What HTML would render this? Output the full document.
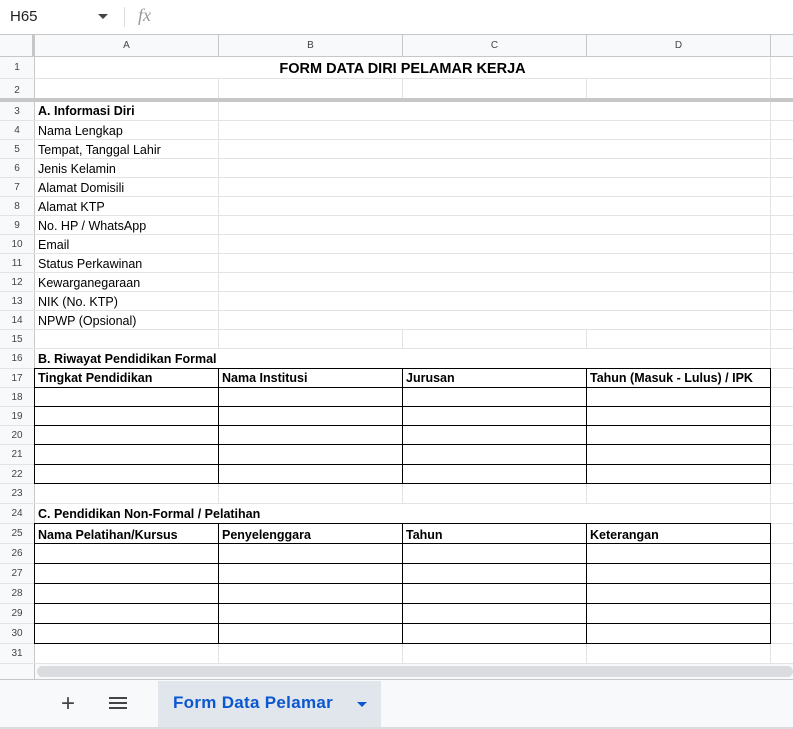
<!DOCTYPE html>
<html><head><meta charset="utf-8"><style>
*{margin:0;padding:0;box-sizing:border-box}
body{width:793px;height:729px;overflow:hidden;background:#fff;font-family:"Liberation Sans",sans-serif;position:relative}
.a{position:absolute}
.rn{position:absolute;left:0;width:34px;text-align:center;font-size:10px;color:#444;}
.t{position:absolute;font-size:12.5px;color:#000;white-space:nowrap;left:38px}
.b{font-weight:bold}
</style></head><body>
<!-- formula bar -->
<div class="a" style="left:10px;top:8px;font-size:15px;color:#1f1f1f">H65</div>
<div class="a" style="left:98px;top:14px;width:0;height:0;border-left:5px solid transparent;border-right:5px solid transparent;border-top:5px solid #444"></div>
<div class="a" style="left:124px;top:7px;width:1px;height:20px;background:#ddd"></div>
<div class="a" style="left:138px;top:5px;font-size:18px;font-style:italic;color:#999;font-family:'Liberation Serif',serif">fx</div>
<div class="a" style="left:0;top:34px;width:793px;height:1px;background:#c7c7c7"></div>
<!-- header row -->
<div class="a" style="left:0;top:35px;width:793px;height:22px;background:#f8f9fa"></div>
<div class="a" style="left:32px;top:35px;width:3px;height:22px;background:#c7c7c7"></div>
<div class="a" style="left:0;top:56px;width:793px;height:1px;background:#c7c7c7"></div>
<div class="a" style="left:218px;top:35px;width:1px;height:22px;background:#c7c7c7"></div>
<div class="a" style="left:402px;top:35px;width:1px;height:22px;background:#c7c7c7"></div>
<div class="a" style="left:586px;top:35px;width:1px;height:22px;background:#c7c7c7"></div>
<div class="a" style="left:770px;top:35px;width:1px;height:22px;background:#c7c7c7"></div>
<div class="a" style="left:35px;top:40px;width:183px;text-align:center;font-size:10px;color:#444">A</div>
<div class="a" style="left:219px;top:40px;width:183px;text-align:center;font-size:10px;color:#444">B</div>
<div class="a" style="left:403px;top:40px;width:183px;text-align:center;font-size:10px;color:#444">C</div>
<div class="a" style="left:587px;top:40px;width:183px;text-align:center;font-size:10px;color:#444">D</div>
<!-- row numbers bg -->
<div class="a" style="left:0;top:57px;width:34px;height:607px;background:#f8f9fa"></div>
<div class="a" style="left:34px;top:57px;width:1px;height:607px;background:#c7c7c7"></div>

<div id="g"></div>
<!-- freeze line -->
<div class="a" style="left:0;top:98px;width:793px;height:4px;background:#c7c7c7"></div>
<script>
var t=[57,79,102];
for(var r=4;r<=16;r++)t.push(121+19*(r-4));
t=t.concat([369,388,407,426,445,465,484,504,524,544,564,584,604,624,644,664]);
// t[k] = top of row k+1 ; t[31]=664
var h='';
function hl(x,y,w,c){h+='<div class="a" style="left:'+x+'px;top:'+y+'px;width:'+w+'px;height:1px;background:'+(c||'#e2e3e3')+'"></div>';}
function vl(x,y,hh,c){h+='<div class="a" style="left:'+x+'px;top:'+y+'px;width:1px;height:'+hh+'px;background:'+(c||'#e2e3e3')+'"></div>';}
for(var r=1;r<=31;r++){
 var y=t[r-1],y2=t[r],hh=y2-y;
 hl(0,y2-1,793,'#e2e3e3');
 h+='<div class="rn" style="top:'+(y+Math.round(hh/2)-6)+'px">'+r+'</div>';
 var cols;
 if(r==1)cols=[770];
 else if(r==2)cols=[218,402,586,770];
 else if(r>=3&&r<=14)cols=[218,770];
 else if(r==16||r==24)cols=[770];
 else cols=[218,402,586,770];
 for(var c=0;c<cols.length;c++)vl(cols[c],y,hh);
}
function tbl(a,b){
 for(var r=a;r<=b+1;r++)hl(34,t[r-1]-1,737,'#000');
 [34,218,402,586,770].forEach(function(x){vl(x,t[a-1]-1,t[b]-t[a-1]+1,'#000');});
}
tbl(17,22);tbl(25,30);
document.getElementById('g').innerHTML=h;
</script>

<div class="a b" style="left:35px;top:61px;width:735px;text-align:center;font-size:14.5px">FORM DATA DIRI PELAMAR KERJA</div>
<div class="t b" style="top:104px">A. Informasi Diri</div>
<div class="t" style="top:124px">Nama Lengkap</div>
<div class="t" style="top:143px">Tempat, Tanggal Lahir</div>
<div class="t" style="top:162px">Jenis Kelamin</div>
<div class="t" style="top:181px">Alamat Domisili</div>
<div class="t" style="top:200px">Alamat KTP</div>
<div class="t" style="top:219px">No. HP / WhatsApp</div>
<div class="t" style="top:238px">Email</div>
<div class="t" style="top:257px">Status Perkawinan</div>
<div class="t" style="top:276px">Kewarganegaraan</div>
<div class="t" style="top:295px">NIK (No. KTP)</div>
<div class="t" style="top:314px">NPWP (Opsional)</div>
<div class="t b" style="top:352px">B. Riwayat Pendidikan Formal</div>
<div class="t b" style="top:371px">Tingkat Pendidikan</div>
<div class="t b" style="top:371px;left:222px">Nama Institusi</div>
<div class="t b" style="top:371px;left:406px">Jurusan</div>
<div class="t b" style="top:371px;left:590px">Tahun (Masuk - Lulus) / IPK</div>
<div class="t b" style="top:507px">C. Pendidikan Non-Formal / Pelatihan</div>
<div class="t b" style="top:528px">Nama Pelatihan/Kursus</div>
<div class="t b" style="top:528px;left:222px">Penyelenggara</div>
<div class="t b" style="top:528px;left:406px">Tahun</div>
<div class="t b" style="top:528px;left:590px">Keterangan</div>

<!-- scrollbar -->
<div class="a" style="left:0;top:664px;width:793px;height:16px;background:#f8f9fa"></div>
<div class="a" style="left:34px;top:664px;width:1px;height:16px;background:#c7c7c7"></div>
<div class="a" style="left:37px;top:666px;width:756px;height:11px;border-radius:6px;background:#dadce0"></div>
<div class="a" style="left:0;top:679px;width:793px;height:1px;background:#c7c7c7"></div>
<!-- tab bar -->
<div class="a" style="left:0;top:680px;width:793px;height:49px;background:#f8f9fa"></div>
<div class="a" style="left:0;top:727px;width:793px;height:2px;background:#dadce0"></div>
<div class="a" style="left:61px;top:694px;font-size:24px;color:#444;line-height:20px">+</div>
<div class="a" style="left:109px;top:697px;width:18px;height:2px;background:#444"></div>
<div class="a" style="left:109px;top:702px;width:18px;height:2px;background:#444"></div>
<div class="a" style="left:109px;top:707px;width:18px;height:2px;background:#444"></div>
<div class="a" style="left:158px;top:681px;width:223px;height:46px;background:#e1e5ec"></div>
<div class="a" style="left:173px;top:693px;font-size:17px;font-weight:bold;color:#0b57d0;letter-spacing:0.3px">Form Data Pelamar</div>
<div class="a" style="left:357px;top:702px;width:0;height:0;border-left:5px solid transparent;border-right:5px solid transparent;border-top:5px solid #0b57d0"></div>
</body></html>
